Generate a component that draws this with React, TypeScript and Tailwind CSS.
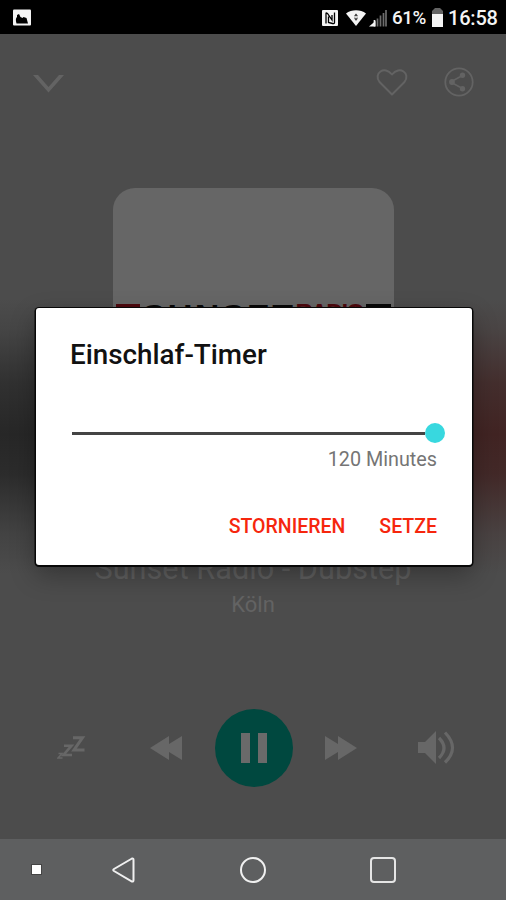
const StatusBar = () => {
  return (
    <header className="flex h-[34px] items-center bg-black pl-[13px] pr-2 pt-px text-[#f4f4f4]">
      <svg width="18" height="17" viewBox="0 0 18 17">
        <rect width="18" height="16" y="0.5" rx="1" fill="#f4f4f4" />
        <path d="M3.500 14.500q-1.500-5 .5-6.500V6l2-1 1.500 3 2 1 1-1 3 1 1.500 5.500z" fill="#000" />
      </svg>
      <svg className="ml-auto" width="16" height="16" viewBox="0 0 16 16">
        <rect width="16" height="16" rx="1" fill="#f4f4f4" />
        <path
          d="M4 13.500V3.500q0-1 1.500 0L10 10V5M6.500 6.500v6l4 1q2 .5 2-1V2.500"
          fill="none"
          stroke="#000"
          strokeWidth="1.300"
        />
      </svg>
      <svg className="ml-[8px]" width="20" height="16" viewBox="0 0 20 16">
        <path d="M0 3.500C5.500 -.8 14.500 -.8 20 3.500L10 16z" fill="#f4f4f4" />
        <path d="m10 3.800 1.500 2h-3zM10 10.500 8.500 8.500h3zM8 7.200h1.500M10.500 7.200H12" fill="#222" stroke="#222" strokeWidth=".4" />
      </svg>
      <svg className="ml-[3px]" width="18" height="18" viewBox="0 0 18 18">
        <path d="M0 17.500 6.500 12v5.500z" fill="#f4f4f4" />
        <path d="M8.500 9.500v8M11.500 6.500v11M14.500 4v13.500M17 1v16.500" stroke="#6d6d6d" strokeWidth="1.700" />
        <path d="M5.500 11v6.500" stroke="#f4f4f4" strokeWidth="1.700" />
      </svg>
      <span className="ml-[5px] mt-px w-[35px] whitespace-nowrap text-[18.800px] font-medium tracking-[-0.4px]">
        61%
      </span>
      <svg className="ml-[5px]" width="11" height="19" viewBox="0 0 11 19">
        <path d="M3 0h5l3 3v4H0V3z" fill="#646464" />
        <path d="M0 6h11v13H0z" fill="#f4f4f4" />
      </svg>
      <span className="ml-[5px] mt-px w-[50px] whitespace-nowrap text-[20px] font-medium tracking-[-0.2px]">
        16:58
      </span>
    </header>
  );
};

const TopActions = () => {
  return (
    <div className="flex h-[96px] items-center pl-[33px] pr-8 text-[#636363]">
      <svg className="mt-[4px]" width="31" height="18" viewBox="0 0 31 18">
        <path d="M0 0h5l10.500 12L26 0h5L15.500 17.500z" fill="currentColor" />
      </svg>
      <svg className="ml-auto" width="32" height="28" viewBox="0 0 32 28">
        <path
          d="M16 26.500 3.500 14C-3 5.500 8.500-3 16 6.500 23.500-3 35 5.500 28.500 14z"
          fill="none"
          stroke="currentColor"
          strokeWidth="2"
          strokeLinejoin="round"
        />
      </svg>
      <svg className="ml-9" width="30" height="30" viewBox="0 0 30 30">
        <circle cx="15" cy="15" r="13.700" fill="none" stroke="currentColor" strokeWidth="1.800" />
        <path d="m18.500 8.500-12 6.500 12 6.500" fill="none" stroke="currentColor" strokeWidth="1.600" />
        <g fill="currentColor">
          <circle cx="18.500" cy="8.300" r="2.700" />
          <circle cx="8" cy="15" r="2.900" />
          <circle cx="18.500" cy="21.700" r="2.700" />
        </g>
      </svg>
    </div>
  );
};

const StationCover = () => {
  return (
    <div className="mx-auto mt-[58px] h-[281px] w-[281px] overflow-hidden rounded-[22px] bg-[#666] pt-[116px]">
      <div className="flex items-start pl-[3px] font-['Liberation_Sans'] text-[34px] leading-[25px] font-black">
        <span className="mr-[3px] h-5 w-[24px] bg-[#4d080d]" />
        <span className="w-[153px] whitespace-nowrap tracking-[2.500px] text-[#080808]">
          SUNSET
        </span>
        <span className="w-[70px] whitespace-nowrap text-[24px] leading-[17px] tracking-[-2px] text-[#4d080d]">
          RADIO
        </span>
        <span className="h-5 w-[25px] bg-[#080808]" />
      </div>
    </div>
  );
};

const PlayerControls = () => {
  return (
    <div className="mt-[89px] flex h-[80px] items-center pl-[57px] text-[#676767]">
      <svg width="29" height="24" viewBox="0 0 29 24" fill="none" stroke="currentColor">
        <path d="M16 1.700h9.500L17 14h10.500" strokeWidth="3" />
        <path d="M7 9.700h7.500L6.500 19H15" strokeWidth="2.600" />
        <path d="M1.500 17.500H5L1 22h4.500" strokeWidth="1.600" />
      </svg>
      <svg className="ml-[64px]" width="33" height="24" viewBox="0 0 33 24">
        <path d="M0 12 19 0v8L32 0v24l-13-8v8z" fill="currentColor" />
      </svg>
      <div className="ml-[32px] flex h-[78px] w-[78px] items-center justify-center gap-[8px] rounded-full bg-[#00483f]">
        <span className="h-[30px] w-[9px] bg-[#6a6a6a]" />
        <span className="h-[30px] w-[9px] bg-[#6a6a6a]" />
      </div>
      <svg className="ml-[32px]" width="33" height="24" viewBox="0 0 33 24">
        <path d="M0 0v24l13-8v8l19-12L13 0v8z" fill="currentColor" />
      </svg>
      <svg className="ml-[60px]" width="37" height="34" viewBox="0 0 37 34">
        <path d="M0 11h7L18 0v33L7 22H0z" fill="currentColor" />
        <path
          d="M21 7Q31 17 21 27M27 1.500Q42 17 27 31.500"
          fill="none"
          stroke="currentColor"
          strokeWidth="3.200"
        />
      </svg>
    </div>
  );
};

const NavigationBar = () => {
  return (
    <nav className="flex h-[61px] items-center bg-[#5e5f60] pl-[32px]">
      <span className="h-[9px] w-[9px] bg-white outline outline-[#444]" />
      <svg className="ml-[70px]" width="25" height="28" viewBox="0 0 25 28">
        <path
          d="M21 2.500 3 13Q1.500 14 3 15l18 10.500Q22.500 26 22.500 24V4Q22.500 2 21 2.500z"
          fill="none"
          stroke="#f0f0f0"
          strokeWidth="2"
        />
      </svg>
      <span className="ml-[104px] h-[26px] w-[26px] rounded-full border-2 border-[#f0f0f0]" />
      <span className="ml-[104px] h-[26px] w-[26px] rounded-[4px] border-2 border-[#e5e5e5]" />
    </nav>
  );
};

const SleepTimerDialog = () => {
  return (
    <div className="absolute left-[35.500px] top-[308px] h-[256.500px] w-[436.500px] rounded-[3px] bg-white pl-[34.500px] pr-[35px] pt-[31px] shadow-[0_0.500px_0_1.500px_#080808,0_10px_26px_#0000004d]">
      <h1 className="w-[198px] whitespace-nowrap text-[27.800px] leading-8 font-medium text-[#111]">
        Einschlaf-Timer
      </h1>
      <div className="mt-[52px] ml-[2px] mr-[-8px] flex h-5 items-center">
        <span className="h-[3px] flex-1 bg-[#444]" />
        <span className="h-5 w-5 rounded-full bg-[#38d8df]" />
      </div>
      <p className="mt-[5px] text-right text-[19.800px] leading-6 text-[#757575]">
        120 Minutes
      </p>
      <div className="mt-[43px] flex justify-end gap-[34px] text-[19.500px] leading-6 font-medium text-[#f6260d]">
        <button>STORNIEREN</button>
        <button>SETZE</button>
      </div>
    </div>
  );
};

const App = () => {
  return (
    <div className="relative flex h-[900px] w-[506px] flex-col overflow-hidden bg-[#4c4c4c] font-[Roboto,sans-serif]">
      <StatusBar />
      <main className="flex-1 bg-[linear-gradient(to_bottom,#4c4c4c_0px,#4c4c4c_265px,#4c4c4cd0_295px,#4c4c4c40_350px,#4c4c4c00_400px,#4c4c4c20_440px,#4c4c4cc0_500px,#4c4c4c_540px,#4c4c4c_100%),linear-gradient(to_right,#272727,#272727_60%,#412423_90%,#412423)]">
        <TopActions />
        <StationCover />
        <h2 className="mt-[82px] text-center text-[30.700px] leading-9 text-[#606060]">
          Sunset Radio - Dubstep
        </h2>
        <p className="mt-[4px] text-center text-[22px] leading-7 text-[#636363]">Köln</p>
        <PlayerControls />
      </main>
      <NavigationBar />
      <SleepTimerDialog />
    </div>
  );
};

export default App;
